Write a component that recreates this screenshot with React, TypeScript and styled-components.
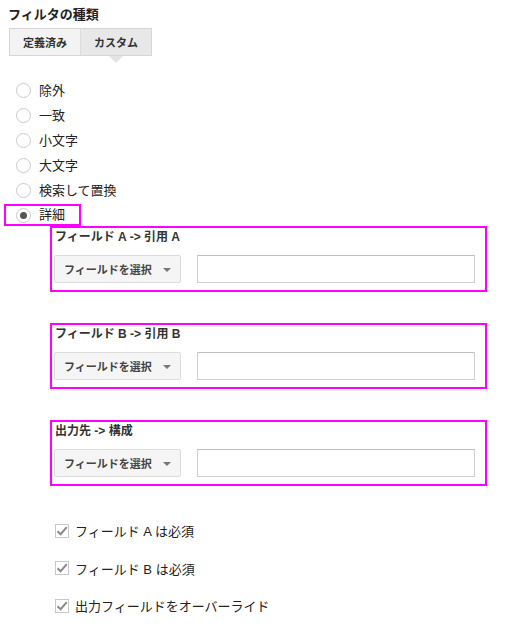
import React from "react";
import styled, { createGlobalStyle } from "styled-components";

const GlobalStyle = createGlobalStyle`
  body {
    margin: 0;
    background: #fff;
    font-family: "Liberation Sans", "Noto Sans CJK JP", sans-serif;
    color: #222;
  }
`;

const Page = styled.div`
  padding: 7px 0 0 8px;
  width: 520px;
`;

const Title = styled.div`
  font-size: 13px;
  font-weight: bold;
  line-height: 16px;
  color: #222;
`;

const Tabs = styled.div`
  display: flex;
  margin: 5px 0 0 1px;
`;

const Tab = styled.div<{ $active?: boolean }>`
  position: relative;
  width: 70px;
  height: 26px;
  display: flex;
  align-items: center;
  justify-content: center;
  font-size: 11px;
  font-weight: bold;
  color: #333;
  border: 1px solid #d6d6d6;
  background: ${(p) => (p.$active ? "#e8e8e8" : "#f3f3f3")};
  & + & {
    border-left: 1px solid #dcdcdc;
    margin-left: -1px;
  }
  ${(p) =>
    p.$active &&
    `
    &::after {
      content: "";
      position: absolute;
      left: 50%;
      bottom: -8px;
      margin-left: -7px;
      border-left: 7px solid transparent;
      border-right: 7px solid transparent;
      border-top: 7px solid #e4e4e4;
    }
  `}
`;

const RadioList = styled.div`
  margin-top: 22px;
  display: flex;
  flex-direction: column;
`;

const RadioRow = styled.div`
  height: 25px;
  display: flex;
  align-items: center;
  margin-left: 8px;
`;

const Highlight = styled.div`
  display: flex;
  align-items: center;
  height: 18px;
  width: 63px;
  margin: 1px 0 0 -4px;
  padding-left: 10px;
  border: 2px solid #ff00ff;
  box-sizing: content-box;
`;

const Circle = styled.span<{ $checked?: boolean }>`
  width: 13px;
  height: 13px;
  border-radius: 50%;
  border: 1px solid #cacaca;
  background: #fff;
  display: flex;
  align-items: center;
  justify-content: center;
  margin-right: 8px;
  flex-shrink: 0;
  &::after {
    content: "";
    display: ${(p) => (p.$checked ? "block" : "none")};
    width: 7px;
    height: 7px;
    border-radius: 50%;
    background: #555;
  }
`;

const RadioText = styled.span`
  font-size: 13px;
  line-height: 16px;
  color: #222;
`;

const Fields = styled.div`
  margin-left: 42px;
  width: 437px;
  display: flex;
  flex-direction: column;
  gap: 31px;
`;

const FieldBox = styled.div`
  box-sizing: border-box;
  height: 66px;
  border: 2px solid #ff00ff;
  padding: 1px 10px 0 3px;
`;

const FieldLabel = styled.div`
  font-size: 12px;
  font-weight: bold;
  line-height: 16px;
  color: #333;
`;

const FieldControls = styled.div`
  display: flex;
  align-items: center;
  gap: 16px;
  margin: 10px 0 0 -1px;
`;

const Select = styled.div`
  box-sizing: border-box;
  width: 127px;
  height: 28px;
  display: flex;
  align-items: center;
  justify-content: space-between;
  padding: 0 9px;
  background: #f5f5f5;
  border: 1px solid #dcdcdc;
  border-radius: 2px;
  font-size: 11px;
  font-weight: bold;
  color: #444;
`;

const Caret = styled.span`
  width: 0;
  height: 0;
  border-left: 4px solid transparent;
  border-right: 4px solid transparent;
  border-top: 4px solid #777;
  margin-top: 2px;
`;

const TextInput = styled.input`
  box-sizing: border-box;
  width: 278px;
  height: 28px;
  border: 1px solid #d0d0d0;
  border-top-color: #c0c0c0;
  background: #fff;
  outline: none;
`;

const Checks = styled.div`
  margin: 26px 0 0 47px;
  display: flex;
  flex-direction: column;
`;

const CheckRow = styled.label`
  height: 37.5px;
  display: flex;
  align-items: center;
  gap: 6px;
  font-size: 13px;
  color: #222;
`;

const Box = styled.span`
  box-sizing: border-box;
  width: 14px;
  height: 14px;
  border: 1px solid #c8c8c8;
  background: #fff;
  display: flex;
  align-items: center;
  justify-content: center;
`;

const Check = () => (
  <Box>
    <svg width="12" height="12" viewBox="0 0 12 12">
      <path d="M1.5 6.2 L4.6 9.2 L10.8 2.2" fill="none" stroke="#8a8a8a" strokeWidth="2" />
    </svg>
  </Box>
);

const fields = ["フィールド A -> 引用 A", "フィールド B -> 引用 B", "出力先 -> 構成"];
const radios = ["除外", "一致", "小文字", "大文字", "検索して置換"];
const checks = ["フィールド A は必須", "フィールド B は必須", "出力フィールドをオーバーライド"];

export default function App() {
  return (
    <Page>
      <GlobalStyle />
      <Title>フィルタの種類</Title>
      <Tabs>
        <Tab>定義済み</Tab>
        <Tab $active>カスタム</Tab>
      </Tabs>
      <RadioList>
        {radios.map((r) => (
          <RadioRow key={r}>
            <Circle />
            <RadioText>{r}</RadioText>
          </RadioRow>
        ))}
        <Highlight>
          <Circle $checked />
          <RadioText>詳細</RadioText>
        </Highlight>
      </RadioList>
      <Fields>
        {fields.map((f) => (
          <FieldBox key={f}>
            <FieldLabel>{f}</FieldLabel>
            <FieldControls>
              <Select>
                <span>フィールドを選択</span>
                <Caret />
              </Select>
              <TextInput type="text" />
            </FieldControls>
          </FieldBox>
        ))}
      </Fields>
      <Checks>
        {checks.map((c) => (
          <CheckRow key={c}>
            <Check />
            {c}
          </CheckRow>
        ))}
      </Checks>
    </Page>
  );
}
